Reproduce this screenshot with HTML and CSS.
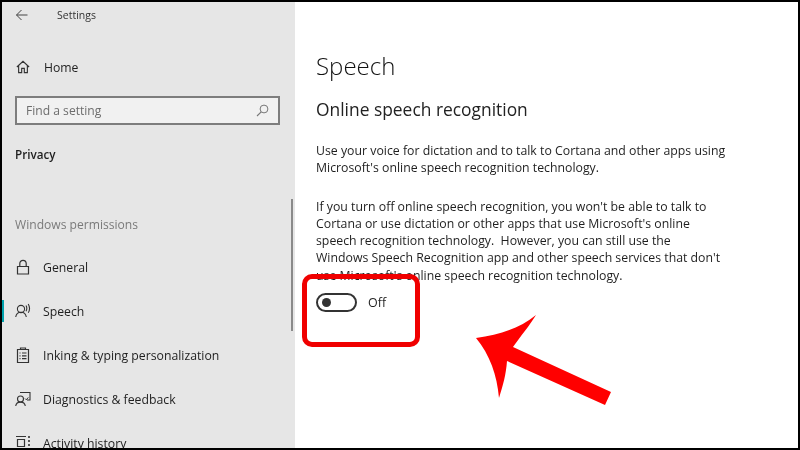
FILE: index.html
```html
<!DOCTYPE html>
<html lang="en">
<head>
<meta charset="utf-8">
<title>Settings</title>
<link rel="stylesheet" href="styles.css">
</head>
<body>
<div class="frame">
  <aside class="sidebar">
    <div class="titlebar">
      <svg class="back" width="14" height="14" viewBox="0 0 14 14"><path d="M12.500 7H1.500M6.500 2 1.500 7l5 5" fill="none" stroke="#444" stroke-width="1"/></svg>
      <span class="apptitle">Settings</span>
    </div>
    <div class="home">
      <svg class="home-icon" width="14" height="14" viewBox="0 0 16 16"><path d="M1 8 8 1.500 15 8M3 6.500V14.500H6.500V9.500H9.500V14.500H13V6.500" fill="none" stroke="#333" stroke-width="1.300"/></svg>
      <span>Home</span>
    </div>
    <div class="search">
      <span>Find a setting</span>
      <svg width="13" height="13" viewBox="0 0 13 13"><circle cx="8" cy="5" r="3.900" fill="none" stroke="#777" stroke-width="1"/><path d="M5.200 7.800 1 12" stroke="#777" stroke-width="1.100"/></svg>
    </div>
    <div class="section">Privacy</div>
    <div class="group">Windows permissions</div>
    <nav class="nav">
      <div class="item">
        <svg width="14" height="16" viewBox="0 0 14 16"><path d="M1.500 7.500h11v7.500h-11zM3.800 7.500V4.500a3.200 3.200 0 0 1 6.400 0v3" fill="none" stroke="#333" stroke-width="1.200"/></svg>
        <span>General</span>
      </div>
      <div class="item active">
        <svg width="16" height="16" viewBox="0 0 16 16"><circle cx="6" cy="6" r="3.600" fill="none" stroke="#333" stroke-width="1.100"/><path d="M.7 14c.5-3.200 2.500-4.800 5.300-4.800S10.800 10.800 11.300 14M11 2.500c1 1.800 1 4 0 5.800M13.200 1c1.600 2.600 1.600 6.200 0 8.800" fill="none" stroke="#333" stroke-width="1.100"/></svg>
        <span>Speech</span>
      </div>
      <div class="item">
        <svg width="14" height="16" viewBox="0 0 14 16"><path d="M1.500 2.500h11v13h-11zM4.500 2.500V1h5v1.500" fill="none" stroke="#333" stroke-width="1.200"/><path d="M3.500 6h1M6 6h4.500M3.500 8.800h1M6 8.800h4.500M3.500 11.600h1M6 11.600h4.500" stroke="#333" stroke-width="1.200"/></svg>
        <span>Inking &amp; typing personalization</span>
      </div>
      <div class="item">
        <svg width="16" height="16" viewBox="0 0 16 16"><circle cx="5.500" cy="8" r="3" fill="none" stroke="#333" stroke-width="1.100"/><path d="M.7 15c.4-2.700 2.200-3.900 4.800-3.900s4.400 1.200 4.800 3.900M5 1.500h10v7.500h-3" fill="none" stroke="#333" stroke-width="1.100"/><path d="M10 7.500l1.300 1.300 2-2.400" fill="none" stroke="#333" stroke-width="1"/></svg>
        <span>Diagnostics &amp; feedback</span>
      </div>
      <div class="item">
        <svg width="16" height="16" viewBox="0 0 16 16"><path d="M1 1.500h10M1 14.500h10M2.500 4.500h7v7h-7z" fill="none" stroke="#333" stroke-width="1.200"/><path d="M14 1v2M14 5v2M14 9v2" stroke="#333" stroke-width="1.600"/></svg>
        <span>Activity history</span>
      </div>
    </nav>
    <div class="scrollthumb"></div>
  </aside>
  <main class="content">
    <h1>Speech</h1>
    <h2>Online speech recognition</h2>
    <p class="first">Use your voice for dictation and to talk to Cortana and other apps using<br>Microsoft's online speech recognition technology.</p>
    <p class="second">If you turn off online speech recognition, you won't be able to talk to<br>Cortana or use dictation or other apps that use Microsoft's online<br>speech recognition technology.&nbsp; However, you can still use the<br>Windows Speech Recognition app and other speech services that don't<br>use Microsoft's online speech recognition technology.</p>
    <div class="toggle-row">
      <span class="toggle"><span class="knob"></span></span>
      <span class="toggle-label">Off</span>
    </div>
  </main>
  <div class="callout"></div>
  <svg class="arrow" width="140" height="92" viewBox="474 313 140 92"><path d="M536 315C520 328 500 335 476 338C490 355 497 375 499 398C503 385 506 375 507 361L605 405L611 392L513 347C520 337 530 325 536 315Z" fill="#ff0000"/></svg>
</div>
</body>
</html>
```
FILE: styles.css
```css
* { box-sizing: border-box; }
html, body { margin: 0; padding: 0; }
body {
  width: 800px;
  height: 450px;
  overflow: hidden;
  font-family: "Open Sans", "Noto Sans", sans-serif;
  background: #000;
}
.frame {
  position: relative;
  width: 800px;
  height: 450px;
  display: flex;
  overflow: hidden;
  border: 2px solid #000;
  background: #fff;
}
.sidebar {
  position: relative;
  width: 293px;
  flex: none;
  background: #e6e6e6;
  overflow: hidden;
  color: #1f1f1f;
  font-size: 12.250px;
  filter: blur(0.3px);
}
.titlebar {
  display: flex;
  align-items: center;
  height: 25px;
  padding-left: 13px;
}
.apptitle {
  margin-left: 28px;
  font-size: 10.500px;
  color: #333;
}
.home {
  display: flex;
  align-items: center;
  gap: 14px;
  height: 24px;
  margin-top: 28px;
  padding-left: 14px;
  font-size: 12.200px;
}
.search {
  display: flex;
  align-items: center;
  justify-content: space-between;
  width: 265px;
  height: 29px;
  margin: 17px 0 0 13px;
  padding: 0 9px;
  background: #f1f1f1;
  border: 2px solid #7d7d7d;
  color: #6d6d6d;
  font-size: 12.100px;
}
.section {
  margin: 19px 0 0 13px;
  font-size: 11.700px;
  font-weight: 600;
  line-height: 20px;
}
.group {
  margin: 51px 0 0 13px;
  font-size: 12.100px;
  line-height: 20px;
  color: #7a7a7a;
}
.nav {
  margin-top: 10px;
}
.item {
  position: relative;
  display: flex;
  align-items: center;
  gap: 12px;
  height: 44px;
  padding-left: 13px;
}
.item svg {
  width: 16px;
  flex: none;
}
.item.active::before {
  content: "";
  position: absolute;
  left: 0;
  top: 11px;
  width: 2px;
  height: 22px;
  background: #00a2ad;
}
.scrollthumb {
  position: absolute;
  left: 289px;
  top: 197px;
  width: 2px;
  height: 132px;
  background: #8a8a8a;
}
.content {
  flex: 1;
  padding-left: 21px;
  color: #1f1f1f;
  filter: blur(0.3px);
}
h1 {
  margin: 44px 0 0;
  font-size: 24px;
  line-height: 40px;
  font-weight: 300;
  color: #111;
}
h2 {
  margin: 11px 0 0;
  font-size: 17.400px;
  line-height: 24px;
  font-weight: 400;
  color: #222;
}
p {
  font-size: 12.300px;
  line-height: 17.300px;
  margin: 0;
}
.first { margin-top: 21px; }
.second { margin-top: 21px; }
.toggle-row {
  display: flex;
  align-items: center;
  margin-top: 5px;
  height: 27px;
}
.toggle {
  display: flex;
  align-items: center;
  width: 41px;
  height: 19px;
  padding-left: 4px;
  border: 2px solid #333;
  border-radius: 10px;
}
.knob {
  width: 9px;
  height: 9px;
  border-radius: 50%;
  background: #333;
}
.toggle-label {
  margin-left: 11px;
  font-size: 12.500px;
}
.callout {
  position: absolute;
  left: 300px;
  top: 272px;
  width: 118px;
  height: 73px;
  border: 5px solid #f00000;
  border-radius: 10px;
}
.arrow {
  position: absolute;
  left: 472px;
  top: 311px;
}
```
